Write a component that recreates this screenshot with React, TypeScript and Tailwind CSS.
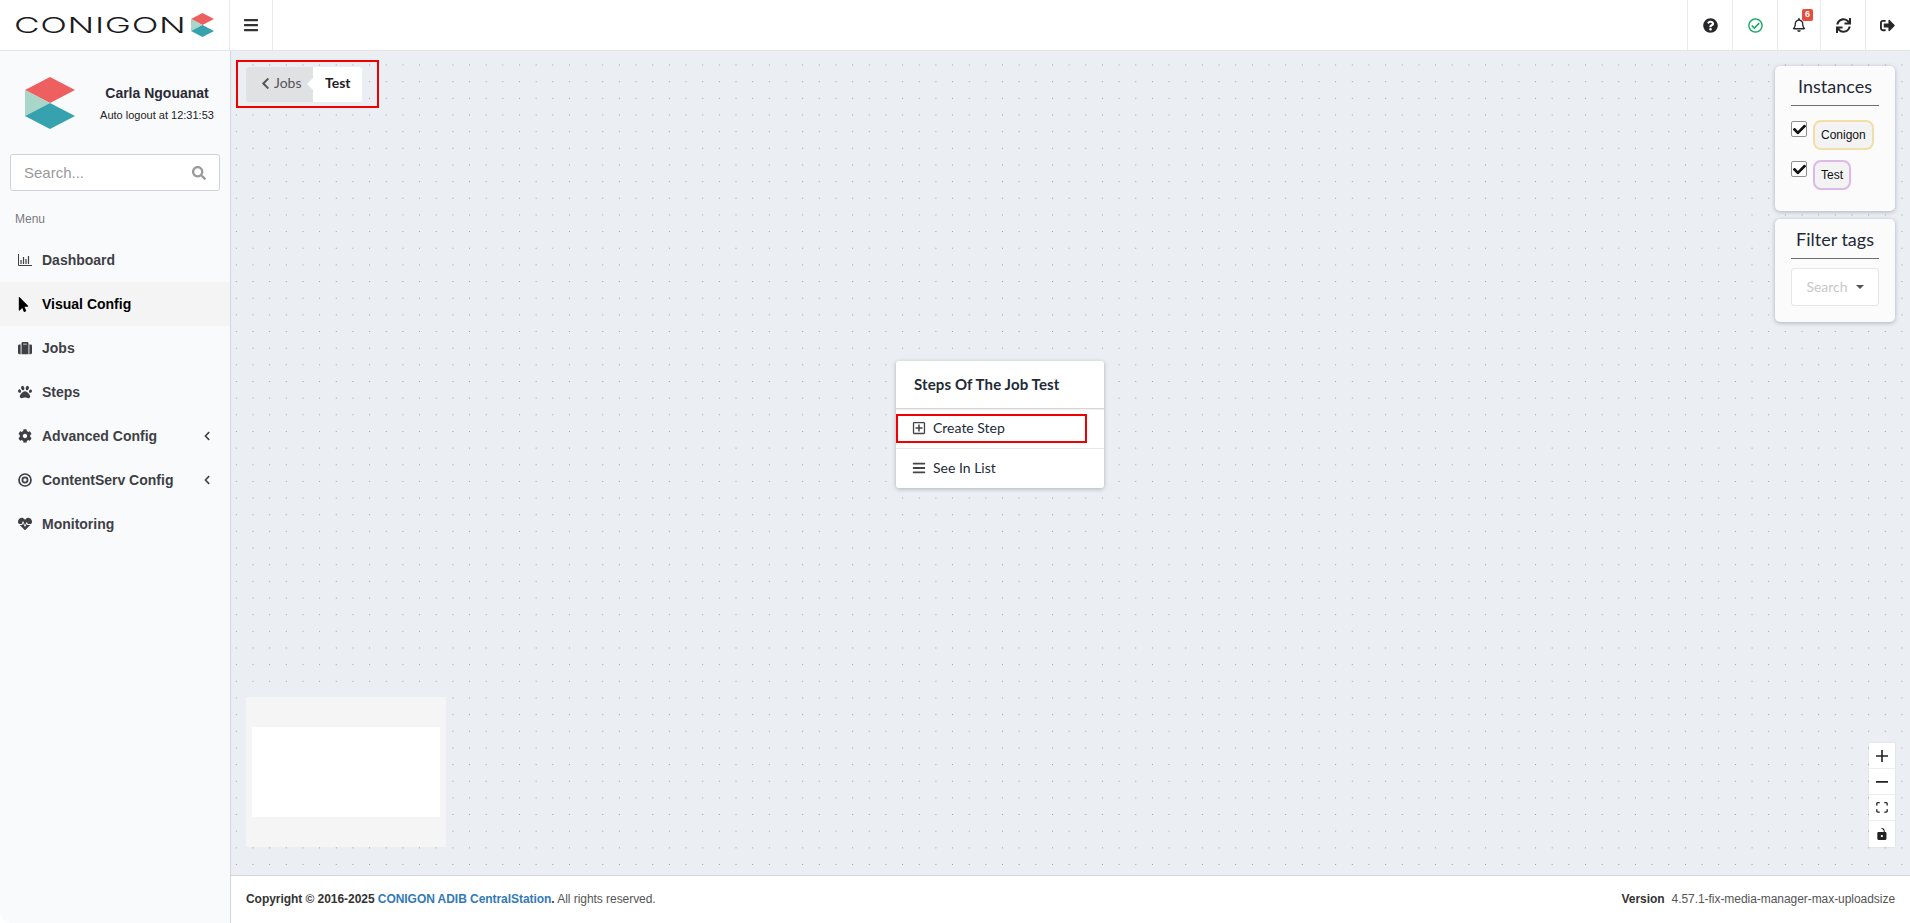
import React from "react";
import {
  FaBars, FaSearch, FaMousePointer, FaSuitcase, FaPaw, FaCog, FaHeartbeat,
  FaChevronLeft, FaQuestionCircle, FaRegCheckCircle, FaRegBell, FaSync, FaSignOutAlt, FaRegPlusSquare, FaCheck,
} from "react-icons/fa";

function Mark({ className }: { className: string }) {
  return (
    <svg viewBox="0 0 50 52" className={className}>
      <path d="M25 0 50 13 25 26 0 13Z" fill="#ee5f5f" />
      <path d="M0 13 25 26 0 39Z" fill="#a9d6c9" />
      <path d="M0 39 25 26 50 39 25 52Z" fill="#35a2ad" />
    </svg>
  );
}

function BarsIcon() {
  return (
    <svg viewBox="0 0 14 12" className="h-[12px] w-[14px]" fill="none" stroke="currentColor">
      <path d="M.5 0v11.5H14" strokeWidth="1" />
      <path d="M3 6v4M5.5 3v7M8 5v5M10.5 2v8" strokeWidth="1.2" />
    </svg>
  );
}

function TargetIcon() {
  return (
    <svg viewBox="0 0 14 14" className="h-[14px] w-[14px]" fill="none" stroke="currentColor" strokeWidth="1.7">
      <circle cx="7" cy="7" r="6" />
      <circle cx="7" cy="7" r="2.6" />
    </svg>
  );
}

const nav = [
  { label: "Dashboard", icon: <BarsIcon />, pad: "" },
  { label: "Visual Config", icon: <FaMousePointer className="-ml-[4px] text-[15px]" />, active: true, pad: "" },
  { label: "Jobs", icon: <FaSuitcase />, pad: "" },
  { label: "Steps", icon: <FaPaw />, pad: "ml-[1px]" },
  { label: "Advanced Config", icon: <FaCog />, more: true, pad: "-ml-[1px]" },
  { label: "ContentServ Config", icon: <TargetIcon />, more: true, pad: "" },
  { label: "Monitoring", icon: <FaHeartbeat />, pad: "" },
];

function Chip({ label, cls }: { label: string; cls: string }) {
  return (
    <div className="flex items-start gap-[6px]">
      <span className="mt-[1px] flex h-[16px] w-[16px] items-center justify-center rounded-[2px] border border-[#8f8f8f] bg-white text-[13px] text-[#111]">
        <FaCheck />
      </span>
      <span className={`flex h-[30px] items-center rounded-[8px] border-2 bg-[#f3f3f3] px-[6px] text-[12px] text-[#111] ${cls}`}>{label}</span>
    </div>
  );
}

export default function App() {
  return (
    <div className="flex h-[923px] w-[1910px] flex-col overflow-hidden rounded-[12px] bg-white font-['Liberation_Sans',sans-serif]">
      <header className="flex h-[51px] shrink-0 border-b border-[#e4e5e9] bg-white">
        <div className="flex w-[229px] shrink-0 items-center pl-[14px]">
          <span className="w-[169px] origin-left scale-x-[1.6] font-['Inter',sans-serif] text-[22px] leading-none font-light tracking-[0.4px] text-[#1b1b1f]">CONIGON</span>
          <Mark className="ml-[8px] h-[26px] w-[23px]" />
        </div>
        <div className="flex w-[44px] items-center justify-center border-x border-[#e9eaec] text-[16px] text-[#333]"><FaBars /></div>
        <div className="flex-1" />
        <div className="flex w-[45px] items-center justify-center border-l border-[#e9eaec] text-[15px] text-[#27272a]"><FaQuestionCircle /></div>
        <div className="flex w-[45px] items-center justify-center border-l border-[#e9eaec] text-[15px] text-[#18a866]"><FaRegCheckCircle /></div>
        <div className="relative flex w-[43px] items-center justify-center border-l border-[#e9eaec] text-[14px] text-[#27272a]">
          <FaRegBell />
          <span className="absolute top-[9px] left-[24px] flex h-[12px] w-[11px] items-center justify-center rounded-[2px] bg-[#e74c3c] text-[9px] font-bold text-white">6</span>
        </div>
        <div className="flex w-[45px] items-center justify-center border-l border-[#e9eaec] text-[15px] text-[#27272a]"><FaSync /></div>
        <div className="flex w-[45px] items-center justify-center border-l border-[#e9eaec] pr-[2px] text-[15px] text-[#27272a]"><FaSignOutAlt /></div>
      </header>

      <div className="flex min-h-0 flex-1">
        <aside className="flex w-[231px] shrink-0 flex-col border-r border-[#d2d4de] bg-[#f9fafc]">
          <div className="flex h-[103px] shrink-0 items-center pl-[25px]">
            <Mark className="h-[52px] w-[50px]" />
            <div className="ml-[25px] flex w-[114px] flex-col items-center">
              <span className="text-[14px] leading-[20px] font-bold text-[#2b2b33]">Carla Ngouanat</span>
              <span className="mt-[4px] text-[11px] leading-[16px] text-[#222]">Auto logout at 12:31:53</span>
            </div>
          </div>
          <div className="mx-[10px] flex h-[37px] items-center justify-between rounded-[3px] border border-[#cfd2da] bg-white pr-[13px] pl-[13px]">
            <span className="mt-[1px] text-[15px] text-[#9a9a9a]">Search...</span>
            <FaSearch className="text-[14px] text-[#999]" />
          </div>
          <div className="mt-[20px] mb-[11px] pl-[15px] text-[12px] leading-[16px] text-[#7a7a82]">Menu</div>
          <nav className="flex flex-col">
            {nav.map((n) => (
              <div key={n.label} className={`flex h-[44px] items-center pr-[18px] pl-[18px] ${n.active ? "bg-[#f4f4f4] text-black" : "text-[#3f3f46]"}`}>
                <span className="flex w-[14px] justify-center text-[14px]">{n.icon}</span>
                <span className={`ml-[10px] flex-1 text-[14px] font-bold ${n.pad}`}>{n.label}</span>
                {n.more && <FaChevronLeft className="text-[10px]" />}
              </div>
            ))}
          </nav>
        </aside>

        <div className="flex min-w-0 flex-1 flex-col">
          <main className="relative min-h-0 flex-1 bg-[#ebeef3] bg-[radial-gradient(circle,#9a9ca3_0.55px,transparent_0.9px)] bg-[size:16.67px_16.67px] bg-[position:-3px_5.7px]">
            <div className="absolute top-[9px] left-[5px] flex h-[48px] w-[143px] items-center border-2 border-[#f00000] pl-[8px]">
              <div className="flex h-[35px] w-[116px] overflow-hidden rounded-[3px] font-['Lato',sans-serif] text-[14px]">
                <div className="flex w-[67px] items-center gap-[2px] bg-[#e0e1e3] pb-[3px] pl-[13px] text-[#55555a]">
                  <FaChevronLeft className="mt-[1px] text-[13px]" /> Jobs
                </div>
                <div className="relative flex flex-1 items-center bg-white pb-[3px] pl-[12px] font-bold text-[#222]">
                  <span className="absolute top-[11px] -left-[6px] h-0 w-0 border-y-[6px] border-r-[6px] border-y-transparent border-r-white" />
                  Test
                </div>
              </div>
            </div>

            <div className="absolute top-[15px] left-[1544px] flex w-[120px] flex-col rounded-[5px] bg-[#fbfbfb] px-[16px] pb-[21px] shadow-[0_1px_4px_rgba(60,60,90,0.35)]">
              <div className="flex h-[40px] items-center justify-center border-b border-[#6f6f6f] pt-[2px] font-['Lato',sans-serif] text-[18px] text-[#1f2937]">Instances</div>
              <div className="mt-[14px] flex flex-col gap-[10px]">
                <Chip label="Conigon" cls="border-[#f3dfa6]" />
                <Chip label="Test" cls="border-[#dcb9e6]" />
              </div>
            </div>

            <div className="absolute top-[168px] left-[1544px] flex w-[120px] flex-col rounded-[5px] bg-[#fbfbfb] px-[16px] pb-[16px] shadow-[0_1px_4px_rgba(60,60,90,0.35)]">
              <div className="flex h-[40px] items-center justify-center border-b border-[#6f6f6f] pt-[2px] font-['Lato',sans-serif] text-[18px] text-[#1f2937]">Filter tags</div>
              <div className="mt-[9px] flex h-[38px] items-center justify-center gap-[8px] rounded-[3px] border border-[#e6e6e6] bg-white pb-[2px] font-['Lato',sans-serif] text-[14px] text-[#c8c8c8]">
                Search
                <span className="mt-[2px] h-0 w-0 border-x-[4px] border-t-[4px] border-x-transparent border-t-[#555]" />
              </div>
            </div>

            <div className="absolute top-[310px] left-[665px] flex w-[208px] flex-col rounded-[3px] bg-white font-['Lato',sans-serif] text-[#222b35] shadow-[0_1px_4px_rgba(60,60,90,0.35)]">
              <div className="flex h-[48px] items-center border-b border-[#d5d6da] pl-[18px] text-[15px] font-bold tracking-[0.12px] shadow-[0_1px_1px_rgba(0,0,0,0.06)]">Steps Of The Job Test</div>
              <div className="flex h-[40px] items-center border-b border-[#e6e7ea]">
                <div className="mt-[-1px] flex h-[29px] w-[191px] items-center border-2 border-[#f00000] pb-[1px] pl-[14px] text-[14px]">
                  <FaRegPlusSquare className="text-[14px] text-[#444]" />
                  <span className="ml-[7px]">Create Step</span>
                </div>
              </div>
              <div className="flex h-[39px] items-center pb-[2px] pl-[16px] text-[14px]">
                <FaBars className="text-[14px] text-[#444]" />
                <span className="ml-[7px]">See In List</span>
              </div>
            </div>

            <div className="absolute bottom-[28px] left-[15px] flex h-[150px] w-[200px] items-center justify-center bg-[#f5f5f5]">
              <div className="h-[90px] w-[188px] bg-white" />
            </div>

            <div className="absolute right-[15px] bottom-[28px] flex w-[26px] flex-col bg-white text-[#222] shadow-[0_0_2px_rgba(0,0,0,0.1)]">
              <div className="flex h-[26px] items-center justify-center border-b border-[#eee]">
                <svg viewBox="0 0 32 32" className="h-[12px] w-[12px]" fill="currentColor"><path d="M32 18.133H18.133V32h-4.266V18.133H0v-4.266h13.867V0h4.266v13.867H32z" /></svg>
              </div>
              <div className="flex h-[26px] items-center justify-center border-b border-[#eee]">
                <svg viewBox="0 0 32 5" className="h-[2px] w-[12px]" fill="currentColor"><path d="M0 0h32v4.2H0z" /></svg>
              </div>
              <div className="flex h-[26px] items-center justify-center border-b border-[#eee]">
                <svg viewBox="0 0 32 30" className="h-[11px] w-[12px]" fill="currentColor"><path d="M3.692 4.63c0-.53.4-.938.939-.938h5.215V0H4.708C2.13 0 0 2.054 0 4.63v5.216h3.692V4.631zM27.354 0h-5.2v3.692h5.17c.53 0 .984.4.984.939v5.215H32V4.631A4.624 4.624 0 0027.354 0zm.954 24.83c0 .532-.4.94-.939.94h-5.215v3.768h5.215c2.577 0 4.631-2.13 4.631-4.707v-5.139h-3.692v5.139zm-23.677.94c-.531 0-.939-.4-.939-.94v-5.138H0v5.139c0 2.577 2.13 4.707 4.708 4.707h5.138V25.77H4.631z" /></svg>
              </div>
              <div className="flex h-[26px] items-center justify-center">
                <svg viewBox="0 0 25 32" className="h-[12px] w-[10px]" fill="currentColor"><path d="M21.333 10.667H19.81V7.619C19.81 3.429 16.38 0 12.19 0c-4.114 1.828-1.37 2.133.305 2.438 1.676.305 4.42 2.59 4.42 5.181v3.048H3.047A3.056 3.056 0 000 13.714v15.238A3.056 3.056 0 003.048 32h18.285a3.056 3.056 0 003.048-3.048V13.714a3.056 3.056 0 00-3.048-3.047zM12.19 24.533a3.056 3.056 0 01-3.047-3.047 3.056 3.056 0 013.047-3.048 3.056 3.056 0 013.048 3.048 3.056 3.056 0 01-3.048 3.047z" /></svg>
              </div>
            </div>
          </main>

          <footer className="flex h-[48px] shrink-0 items-center justify-between border-t border-[#d2d4de] bg-white pr-[15px] pb-[2px] pl-[15px] text-[12px] tracking-[-0.05px] text-[#555]">
            <div>
              <b className="text-[#333]">Copyright © 2016-2025 <span className="text-[#337ab7]">CONIGON ADIB CentralStation</span>.</b> All rights reserved.
            </div>
            <div>
              <b className="mr-[7px] text-[#333]">Version</b>4.57.1-fix-media-manager-max-uploadsize
            </div>
          </footer>
        </div>
      </div>
    </div>
  );
}
